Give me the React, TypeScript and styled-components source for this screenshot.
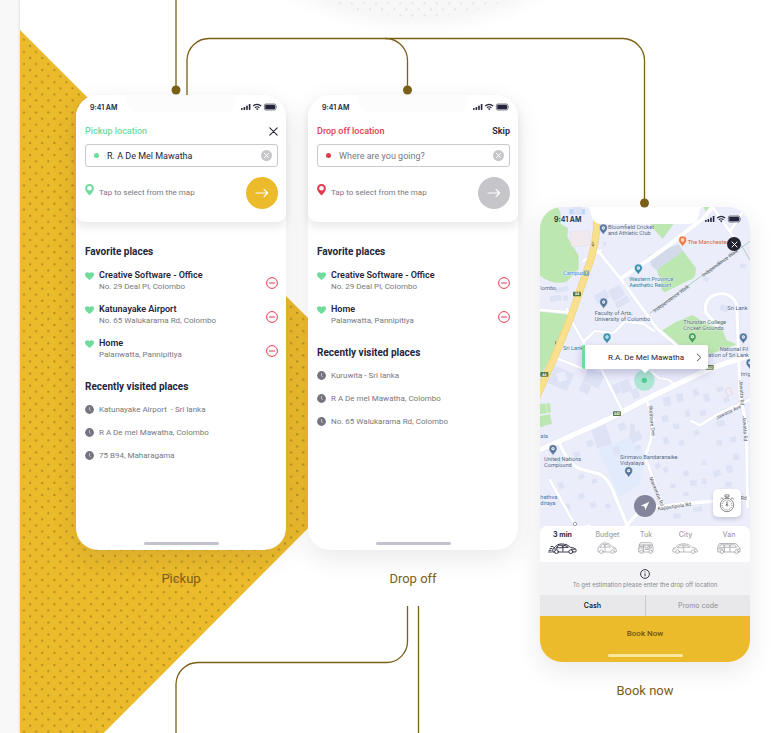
import React from "react";
import styled, { createGlobalStyle } from "styled-components";

const ink = "#24243a";
const muted = "#77777f";
const green = "#6fdc9b";
const red = "#e23b4e";
const amber = "#ecbb2b";
const bronze = "#7a6016";
const smallFont = `Inter, "Liberation Sans", sans-serif`;

const GlobalStyle = createGlobalStyle`
  * { box-sizing: border-box; }
  body {
    margin: 0;
    background: #f8f8f8;
    font-family: Roboto, "Liberation Sans", sans-serif;
    color: ${ink};
  }
  button, input { font: inherit; color: inherit; margin: 0; padding: 0; border: 0; background: none; }
  button { cursor: pointer; }
  h2, h3, p, ul, figure { margin: 0; padding: 0; }
  ul { list-style: none; }
  svg { display: block; }
`;

const Board = styled.main`
  position: relative;
  overflow: hidden;
  min-height: 100vh;
  margin-left: 20px;
  padding: 95px 26px 30px 56px;
  background: #fff;
  box-shadow: 0 0 3px rgba(0, 0, 0, 0.16);
`;

const Layer = styled.svg`
  position: absolute;
  inset: 0;
  width: 100%;
  height: 100%;
  pointer-events: none;
`;

const Screens = styled.div`
  position: relative;
  display: grid;
  grid-template-columns: repeat(3, minmax(0, 1fr));
  gap: 22px;
  align-items: start;
`;

const Flow = styled.figure<{ $lowered?: boolean }>`
  display: flex;
  flex-direction: column;
  gap: 20px;
  margin-top: ${(p) => (p.$lowered ? 112 : 0)}px;
`;

const Caption = styled.figcaption`
  text-align: center;
  font-size: 13px;
  line-height: 18px;
  color: ${bronze};
`;

const Phone = styled.section`
  position: relative;
  display: flex;
  flex-direction: column;
  min-height: 455px;
  border-radius: 22px;
  background: #fff;
  box-shadow: 0 8px 26px rgba(40, 40, 60, 0.1);
`;

const NotchShape = styled.svg`
  position: absolute;
  top: 0;
  left: 50%;
  margin-left: -60px;
`;

const StatusBar = styled.div<{ $floating?: boolean }>`
  position: ${(p) => (p.$floating ? "absolute" : "relative")};
  inset: 0 0 auto 0;
  display: flex;
  align-items: center;
  justify-content: space-between;
  height: 24px;
  padding: 0 8px 0 14px;
  font-family: ${smallFont};
  font-size: 7px;
  font-weight: 600;
`;

const Header = styled.form`
  position: relative;
  height: 127px;
  border-radius: 22px 22px 9px 9px;
  background: #fff;
  box-shadow: 0 5px 8px rgba(40, 40, 60, 0.1);
`;

const HeaderBody = styled.div`
  padding: 5px 8px 0 9px;
`;

const TitleRow = styled.div`
  display: flex;
  align-items: center;
  justify-content: space-between;
  height: 14px;
  font-size: 9px;
  line-height: 14px;
`;

const FieldLabel = styled.label<{ $tone: string }>`
  color: ${(p) => p.$tone};
  font-weight: 500;
`;

const TextButton = styled.button`
  font-weight: 600;
`;

const Field = styled.div`
  display: flex;
  align-items: center;
  gap: 8px;
  height: 23px;
  margin-top: 6px;
  padding: 0 5px 0 8px;
  border: 1px solid #c9c9ce;
  border-radius: 3px;
`;

const Dot = styled.span<{ $tone: string }>`
  flex: none;
  width: 5px;
  height: 5px;
  border-radius: 50%;
  background: ${(p) => p.$tone};
`;

const FieldInput = styled.input`
  flex: 1;
  min-width: 0;
  font-size: 9px;
  line-height: 14px;
  outline: none;
  &::placeholder { color: ${muted}; opacity: 1; }
`;

const MapRow = styled.div`
  display: flex;
  align-items: center;
  justify-content: space-between;
  margin-top: 10px;
`;

const MapLink = styled.button`
  display: flex;
  align-items: center;
  gap: 5px;
  font-size: 8px;
  line-height: 12px;
  color: ${muted};
`;

const PinIcon = styled.svg`
  margin-bottom: 6px;
`;

const GoButton = styled.button<{ $active: boolean }>`
  display: grid;
  place-items: center;
  width: 32px;
  height: 32px;
  border-radius: 50%;
  background: ${(p) => (p.$active ? amber : "#c5c5ca")};
`;

const Places = styled.div`
  padding: 22px 8px 0 9px;
`;

const Heading = styled.h2`
  font-size: 10px;
  line-height: 16px;
  font-weight: 700;
`;

const Favorites = styled.ul`
  padding: 4px 0 13px;
`;

const Favorite = styled.li`
  display: grid;
  grid-template-columns: 9px 1fr auto;
  column-gap: 5px;
  align-items: center;
  height: 34px;
`;

const PlaceName = styled.h3`
  font-size: 9px;
  line-height: 12px;
  font-weight: 600;
`;

const PlaceAddress = styled.p`
  font-size: 8px;
  line-height: 12px;
  color: ${muted};
`;

const HeartIcon = styled.svg`
  align-self: start;
  margin-top: 8px;
`;

const RemoveButton = styled.button`
  margin-top: 4px;
`;

const Recents = styled.ul`
  padding-top: 3px;
`;

const Recent = styled.li`
  display: flex;
  align-items: center;
  gap: 5px;
  height: 23px;
  font-size: 8px;
  color: ${muted};
  white-space: pre;
`;

const HomeBar = styled.span<{ $tone: string }>`
  align-self: center;
  width: 75px;
  height: 3px;
  margin: auto auto 5px;
  border-radius: 2px;
  background: ${(p) => p.$tone};
`;

const BookingScreen = styled.div`
  position: relative;
  display: flex;
  flex-direction: column;
  height: 455px;
  overflow: hidden;
  border-radius: 22px;
`;

const MapArea = styled.div`
  position: relative;
  height: 319px;
`;

const MapDrawing = styled.svg`
  width: 100%;
  height: 328px;
`;

const AddressPopup = styled.button`
  position: absolute;
  top: 138px;
  left: 42px;
  right: 42px;
  display: flex;
  align-items: center;
  justify-content: space-between;
  height: 24px;
  padding: 0 6px 0 23px;
  border-left: 3px solid ${green};
  border-radius: 2px;
  background: #fff;
  box-shadow: 0 4px 8px rgba(50, 50, 110, 0.25);
  font-size: 8px;
  &::after {
    content: "";
    position: absolute;
    left: 57px;
    bottom: -3px;
    width: 6px;
    height: 6px;
    background: #fff;
    transform: rotate(45deg);
  }
`;

const MapButton = styled.button`
  position: absolute;
  display: grid;
  place-items: center;
`;

const CloseMap = styled(MapButton)`
  top: 30px;
  right: 9px;
  width: 14px;
  height: 14px;
  border-radius: 50%;
  background: #23232f;
`;

const LocateButton = styled(MapButton)`
  bottom: 9px;
  left: 50%;
  width: 22px;
  height: 22px;
  margin-left: -11px;
  border-radius: 50%;
  background: #84849a;
`;

const TimerButton = styled(MapButton)`
  right: 9px;
  bottom: 9px;
  width: 28px;
  height: 28px;
  border-radius: 5px;
  background: #fff;
  box-shadow: 0 2px 4px rgba(50, 50, 80, 0.2);
`;

const VehicleBar = styled.div`
  position: relative;
  display: flex;
  justify-content: space-between;
  height: 36px;
  padding: 4px 9px 0 8px;
  border-radius: 7px 7px 0 0;
  background: #fff;
`;

const Vehicle = styled.button<{ $selected?: boolean }>`
  display: flex;
  flex-direction: column;
  align-items: center;
  gap: 2px;
  font-family: ${smallFont};
  font-size: 7px;
  line-height: 10px;
  font-weight: ${(p) => (p.$selected ? 700 : 500)};
  color: ${(p) => (p.$selected ? ink : "#a2a2a8")};
`;

const Estimate = styled.div`
  display: flex;
  flex-direction: column;
  align-items: center;
  justify-content: center;
  gap: 1px;
  height: 33px;
  background: #f3f3f5;
  font-family: ${smallFont};
  font-size: 6px;
  line-height: 9px;
  color: #88888e;
  white-space: nowrap;
`;

const PayTabs = styled.div`
  display: grid;
  grid-template-columns: 1fr 1fr;
  height: 21px;
  background: #e8e8ea;
  font-family: ${smallFont};
`;

const PayTab = styled.button<{ $selected?: boolean }>`
  font-size: 7px;
  font-weight: ${(p) => (p.$selected ? 600 : 400)};
  color: ${(p) => (p.$selected ? ink : "#8c8c92")};
  & + & { border-left: 1px solid #cacace; }
`;

const BookBar = styled.div`
  display: flex;
  flex: 1;
  flex-direction: column;
  background: ${amber};
`;

const BookButton = styled.button`
  height: 34px;
  font-size: 8px;
  font-weight: 500;
  color: #6b5413;
`;

function StatusIcons() {
  return (
    <svg width="37" height="8" viewBox="0 0 37 8" fill={ink} aria-hidden="true">
      <rect x="0" y="5" width="1.6" height="2" rx=".4" />
      <rect x="2.6" y="4" width="1.6" height="3" rx=".4" />
      <rect x="5.2" y="2.6" width="1.6" height="4.4" rx=".4" />
      <rect x="7.8" y="1" width="1.6" height="6" rx=".4" />
      <g fill="none" stroke={ink} strokeWidth="1.2">
        <path d="M12.2 3Q16.2-.4 20.2 3" />
        <path d="M13.9 4.7Q16.2 2.8 18.5 4.7" />
      </g>
      <path d="M14.9 5.7Q16.2 4.8 17.5 5.7L16.2 7.2Z" />
      <rect x="23.4" y="1" width="11.4" height="6" rx="1.4" fill="none" stroke={ink} strokeWidth=".6" />
      <rect x="24.2" y="1.8" width="9.8" height="4.4" rx=".8" />
      <path d="M35.4 3Q36.6 4 35.4 5Z" />
    </svg>
  );
}

function Status({ floating, notch }: { floating?: boolean; notch: string }) {
  return (
    <StatusBar $floating={floating}>
      <NotchShape width="120" height="17" viewBox="0 0 120 17" aria-hidden="true">
        <path d="M0 0C5 0 5 2 6 7C7 13 10 17 16 17H104C110 17 113 13 114 7C115 2 115 0 120 0Z" fill={notch} />
      </NotchShape>
      <span>9:41 AM</span>
      <StatusIcons />
    </StatusBar>
  );
}

function ClearIcon() {
  return (
    <svg width="11" height="11" viewBox="0 0 11 11" aria-hidden="true">
      <circle cx="5.5" cy="5.5" r="5.5" fill="#c5c5ca" />
      <path d="M3.4 3.4L7.6 7.6M7.6 3.4L3.4 7.6" stroke="#fff" strokeWidth="1" strokeLinecap="round" />
    </svg>
  );
}

type FavoritePlace = { name: string; address: string };

function LocationScreen(props: {
  id: string;
  title: string;
  tone: string;
  value?: string;
  skippable?: boolean;
  favorites: FavoritePlace[];
  recents: string[];
}) {
  const { id, title, tone, value, skippable, favorites, recents } = props;
  return (
    <Phone>
      <Header onSubmit={(e) => e.preventDefault()}>
        <Status notch="#fcfcfc" />
        <HeaderBody>
          <TitleRow>
            <FieldLabel htmlFor={id} $tone={tone}>{title}</FieldLabel>
            {skippable ? (
              <TextButton type="button">Skip</TextButton>
            ) : (
              <button type="button" aria-label="Close">
                <svg width="9" height="9" viewBox="0 0 9 9" stroke={ink} strokeWidth="1.1" strokeLinecap="round">
                  <path d="M.8.8L8.2 8.2M8.2.8L.8 8.2" />
                </svg>
              </button>
            )}
          </TitleRow>
          <Field>
            <Dot $tone={tone} />
            <FieldInput id={id} defaultValue={value} placeholder="Where are you going?" />
            <button type="button" aria-label="Clear"><ClearIcon /></button>
          </Field>
          <MapRow>
            <MapLink type="button">
              <PinIcon width="9" height="12" viewBox="0 0 9 12" aria-hidden="true">
                <path d="M4.5 0A4.4 4.4 0 0 0 .1 4.4C.1 7 2.2 8.6 4.5 11.6C6.8 8.6 8.9 7 8.9 4.4A4.4 4.4 0 0 0 4.5 0Z" fill={tone} />
                <circle cx="4.5" cy="4.3" r="2.3" fill="#fff" />
              </PinIcon>
              Tap to select from the map
            </MapLink>
            <GoButton $active={!!value} aria-label="Continue">
              <svg width="14" height="10" viewBox="0 0 14 10" fill="none" stroke="#fff" strokeWidth="1.2" strokeLinecap="round" strokeLinejoin="round">
                <path d="M1 5H12.6M9 1.4L12.6 5L9 8.6" />
              </svg>
            </GoButton>
          </MapRow>
        </HeaderBody>
      </Header>
      <Places>
        <Heading>Favorite places</Heading>
        <Favorites>
          {favorites.map((f) => (
            <Favorite key={f.name}>
              <HeartIcon width="9" height="8" viewBox="0 0 9 8" aria-hidden="true">
                <path d="M4.5 7.9C2 6 0 4.6 0 2.5C0 .2 3 -.7 4.5 1.3C6-.7 9 .2 9 2.5C9 4.6 7 6 4.5 7.9Z" fill={green} />
              </HeartIcon>
              <div>
                <PlaceName>{f.name}</PlaceName>
                <PlaceAddress>{f.address}</PlaceAddress>
              </div>
              <RemoveButton aria-label={"Remove " + f.name}>
                <svg width="12" height="12" viewBox="0 0 12 12" fill="none" stroke={red}>
                  <circle cx="6" cy="6" r="5.4" />
                  <path d="M3 6H9" />
                </svg>
              </RemoveButton>
            </Favorite>
          ))}
        </Favorites>
        <Heading>Recently visited places</Heading>
        <Recents>
          {recents.map((r) => (
            <Recent key={r}>
              <svg width="9" height="9" viewBox="0 0 9 9" aria-hidden="true">
                <circle cx="4.5" cy="4.5" r="4.4" fill="#747480" />
                <path d="M4.5 2.2V4.8L5.8 5.8" fill="none" stroke="#d8d8de" strokeWidth=".8" />
              </svg>
              {r}
            </Recent>
          ))}
        </Recents>
      </Places>
      <HomeBar $tone="#c5c2d0" />
    </Phone>
  );
}

const buildings: [number, number, number, number, number][] = [
  [62, 486, 62, 56, 24], [165, 490, 52, 46, 24], [150, 530, 30, 28, 24], [270, 520, 32, 36, -20],
  [305, 545, 22, 30, -20], [250, 530, 18, 30, -20], [190, 650, 46, 70, -18], [265, 648, 22, 22, -24],
  [300, 675, 34, 28, -24], [250, 720, 18, 22, -20], [80, 760, 14, 12, -24], [130, 735, 20, 18, -24],
  [170, 700, 20, 18, -24], [145, 802, 18, 14, -20], [185, 815, 16, 14, -20], [85, 825, 16, 20, -20],
  [145, 860, 18, 16, -20], [180, 885, 18, 16, -20], [100, 890, 20, 18, -20], [225, 890, 16, 14, -20],
  [300, 650, 14, 40, 0], [315, 715, 18, 14, -20], [400, 570, 22, 26, -10], [440, 560, 20, 26, -10],
  [490, 545, 16, 22, -16], [522, 560, 16, 24, -16], [395, 625, 20, 20, -10], [430, 650, 18, 16, -14],
  [465, 610, 14, 20, -14], [510, 610, 18, 16, -14], [560, 640, 24, 18, -20], [580, 570, 18, 16, -20],
  [560, 540, 20, 14, -20], [400, 690, 16, 22, -14], [445, 700, 18, 16, -14], [490, 670, 18, 14, -14],
  [560, 700, 16, 16, -10], [600, 690, 18, 16, -10], [460, 790, 16, 18, 0], [480, 820, 20, 16, 0],
  [515, 760, 14, 14, 0], [515, 815, 14, 16, 0], [550, 790, 22, 18, -20], [590, 775, 18, 22, -10],
  [585, 825, 20, 16, 10], [375, 770, 16, 14, -30], [400, 780, 14, 16, -30], [420, 830, 16, 14, 0],
  [460, 855, 16, 12, 0], [490, 900, 26, 14, -6], [430, 920, 22, 14, -6], [610, 740, 18, 18, 0],
  [240, 240, 40, 36, -30], [195, 255, 40, 28, -30], [255, 275, 44, 20, -30], [60, 265, 34, 18, -10],
  [100, 265, 14, 16, -10], [75, 240, 40, 14, -10], [130, 0, 26, 20, 0], [560, 160, 14, 14, 10],
  [630, 170, 18, 14, 10], [220, 105, 8, 10, 0], [520, 210, 16, 14, 20], [570, 295, 26, 18, 20],
  [340, 230, 16, 12, -30], [370, 440, 18, 12, -20],
];

const roads: [string, number][] = [
  ["M548 0L520 34L420 112L350 162L272 214", 13],
  ["M195 124L216 146L280 226L380 364L450 424", 10],
  ["M160 162L212 130", 8],
  ["M548 0L600 74L652 -6", 9],
  ["M600 74L628 116", 7],
  ["M562 354L528 318Q520 272 560 262Q602 252 620 292L630 560L650 660L652 900", 10],
  ["M26 730L240 634L350 576L540 484L668 442", 17],
  ["M70 450L160 485", 8],
  ["M110 305L124 340L160 404L170 450L215 488L274 606", 8],
  ["M160 404L195 372L250 378L285 344L340 350L372 372", 8],
  ["M365 495L388 514Q424 514 430 532", 7],
  ["M352 586L370 639L362 700L345 750L398 890", 9],
  ["M90 712Q115 772 150 785L210 802Q232 812 248 850L292 956", 11],
  ["M60 820L142 966", 9],
  ["M286 960L335 905L460 890L660 874", 11],
  ["M485 642L510 655L570 618L664 576", 9],
  ["M30 308L110 316L130 320", 9],
  ["M120 966L180 955", 6],
];

function MapPin({ x, y, tone }: { x: number; y: number; tone: string }) {
  return (
    <g transform={`translate(${x} ${y})`}>
      <path d="M0 20C-3 11-12 8-12-1A12 12 0 0 1 12-1C12 8 3 11 0 20Z" fill={tone} stroke="#fff" strokeWidth="1.5" />
      <circle cy="-1" r="5" fill="#fff" />
      <path d="M-2.5-3.5H2.5V1H-2.5Z" fill={tone} opacity=".55" />
    </g>
  );
}

function CityMap() {
  const slate = "#56759c";
  const teal = "#3b8fb0";
  const avenue = "M200 30V66Q196 116 180 164L125 322L96 396L60 480L20 570";
  return (
    <MapDrawing viewBox="30 0 630 984" preserveAspectRatio="xMidYMin slice" role="img" aria-label="Map of Colombo">
      <rect x="-400" width="1500" height="984" fill="#ebedfb" />
      <path d="M205 730L300 690L345 745L330 830L270 870Z" fill="#e1ebfb" />
      <g fill="#bde7b0">
        <path d="M0 0H84L92 20V50L114 64L112 90L146 146V186L110 224Q70 236 30 206L0 190Z" />
        <path d="M20 312L122 324L80 420L30 510Z" />
        <path d="M360 54L384 44H436L398 96Z" />
        <path d="M446 114L497 182Q500 212 480 218L405 256Q388 248 394 224L380 190Z" />
        <path d="M394 372L436 346L488 324L530 352L576 366L590 400L620 412L530 446L474 452L452 424Z" />
        <path d="M520 0H540L528 14Z" />
        <path d="M26 590H46L52 618L28 622ZM48 590L60 588L62 615L54 618ZM26 628L60 622L66 650L26 660ZM26 640H40V660H26Z" />
      </g>
      <path d="M118 6H165V22H118Z" fill="#b9d8fa" />
      <path d="M120 74L178 70L180 112L160 118H124Z" fill="#f1e9ee" stroke="#ded6e4" />
      <path d="M354 146L446 112L458 134L380 190L364 176Z" fill="#d3dae9" />
      <g fill="#dde2f5">
        {buildings.map(([x, y, w, h, a]) => (
          <rect key={`${x}-${y}`} x={x} y={y} width={w} height={h} transform={`rotate(${a} ${x + w / 2} ${y + h / 2})`} />
        ))}
      </g>
      <path d="M78 500L104 492L112 518L86 526Z" fill="#ebedfb" />
      <path d="M586 548L600 542L608 560L594 568Z" fill="none" stroke="#f0c6c4" strokeWidth="2" />
      <g fill="none" strokeLinejoin="round" strokeLinecap="round">
        {roads.map(([d, w]) => <path key={d} d={d} stroke="#dadff0" strokeWidth={w + 2} />)}
        {roads.map(([d, w]) => <path key={d} d={d} stroke="#fff" strokeWidth={w} />)}
        <path d={avenue} stroke="#ecd07c" strokeWidth="22" />
        <path d={avenue} stroke="#f8e08c" strokeWidth="18" />
        <path d="M360 318L664 100M628 104L664 166" stroke="#95bfa2" strokeWidth="2" />
      </g>
      <path d="M189 104V116M185 112L189 118L193 112M78 402L76 412" stroke="#77683d" strokeWidth="2" fill="none" />
      <circle cx="135" cy="951" r="5" fill="#fff" stroke="#777" strokeWidth="2" />

      <MapPin x={220} y={64} tone={slate} />
      <MapPin x={458} y={100} tone="#ee7a45" />
      <MapPin x={325} y={184} tone={teal} />
      <MapPin x={221} y={286} tone={slate} />
      <MapPin x={231} y={391} tone={teal} />
      <MapPin x={487} y={390} tone="#4aa35a" />
      <MapPin x={640} y={391} tone={slate} />
      <MapPin x={660} y={468} tone={slate} />
      <MapPin x={69} y={726} tone={slate} />
      <MapPin x={296} y={792} tone={slate} />

      <g fontFamily="Roboto, sans-serif" fontSize="17" fill="#4d6584" stroke="#f3f4fd" strokeWidth="2" paintOrder="stroke">
        <text x="234" y="65">Bloomfield Cricket</text>
        <text x="234" y="83">and Athletic Club</text>
        <text x="473" y="110" fill="#cf6037">The Manchester</text>
        <text x="298" y="223" fill="#2d7f9c">Western Province</text>
        <text x="298" y="241" fill="#2d7f9c">Aesthetic Resort</text>
        <text x="99" y="205" fill="#3a8fe0">Campus</text>
        <text x="31" y="250">lombo</text>
        <text x="194" y="325">Faculty of Arts,</text>
        <text x="194" y="343">University of Colombo</text>
        <text x="592" y="309">Sri Lank</text>
        <text x="460" y="352" fill="#44705a">Thurstan College</text>
        <text x="460" y="370" fill="#44705a">Cricket Grounds</text>
        <text x="99" y="430" fill="#2d7f9c">Sri Lank</text>
        <text x="569" y="431">National Fil</text>
        <text x="529" y="449">ration of Sri Lank</text>
        <text x="632" y="508">Irrig</text>
        <text x="31" y="692" fill="#3c7a9e">ala</text>
        <text x="42" y="762">United Nations</text>
        <text x="42" y="780">Compound</text>
        <text x="270" y="756">Sirimavo Bandaranaike</text>
        <text x="270" y="774">Vidyalaya</text>
        <text x="31" y="876" fill="#3c6fae">hathva</text>
        <text x="31" y="894" fill="#3c6fae">diraya</text>
      </g>
      <path d="M163 192H176V205H163ZM166 195V202H173V195" fill="none" stroke="#3a8fe0" strokeWidth="2" />
      <g fontFamily="Roboto, sans-serif" fontSize="15" fill="#555964">
        <text transform="translate(520 210) rotate(-36)">Independence Walk</text>
        <text transform="translate(374 317) rotate(-36)">Independence Walk</text>
        <text transform="translate(560 638) rotate(-26)">Jawatta Ave</text>
        <text transform="translate(628 520) rotate(87)">Jawatta Rd</text>
        <text transform="translate(638 628) rotate(87)">Jawatta Rd</text>
        <text transform="translate(356 596) rotate(84)">Skelmore Dve</text>
        <text transform="translate(358 812) rotate(68)">Mackenzie Rd</text>
        <text transform="translate(384 910) rotate(-8)">Kappetipola Rd</text>
        <text x="632" y="880">Rd</text>
      </g>
      <g fontFamily="Roboto, sans-serif" fontSize="10" fontWeight="700" fill="#fff" textAnchor="middle">
        {[[141, 261, "A4"], [43, 502, "A4"], [539, 481, "A42"], [261, 620, "A42"]].map(([x, y, t]) => (
          <g key={`${x}`} transform={`translate(${x} ${y})`}>
            <rect x="-12" y="-7" width="24" height="14" rx="2" fill="#55763f" />
            <text y="4">{t}</text>
          </g>
        ))}
      </g>
      <circle cx="343" cy="520" r="31" fill="#8fe0bd" opacity=".65" />
      <circle cx="343" cy="520" r="8" fill="#4fce8f" />
    </MapDrawing>
  );
}

function VehicleIcon({ kind }: { kind: string }) {
  const shared = { fill: "none", stroke: "currentColor", strokeLinecap: "round" as const, strokeLinejoin: "round" as const };
  if (kind === "fast") {
    return (
      <svg width="29" height="12" viewBox="0 0 29 12" strokeWidth=".9" {...shared}>
        <path d="M5 10H6.500M10.500 10H20.500M25 10H27.700Q28.700 8 27.500 6.800Q25.500 5.700 22.500 5.400Q19 2 15.500 2H12Q9 2.200 7 5.200L5 6.300Q4.300 8 5 10" />
        <path d="M8.500 5.400L11 3.200H14.300V5.400ZM15.500 3.200Q18 3.300 20.300 5.400H15.500ZM14.900 5.600V9M6 6.900H9M23.500 7.300H26.500" />
        <circle cx="8.500" cy="9.700" r="1.900" /><circle cx="22.800" cy="9.700" r="1.900" />
        <path d="M3 4.500H5M2 6.500H3.500M1 8.300H3.200M.6 10H3.400" />
      </svg>
    );
  }
  if (kind === "mini") {
    return (
      <svg width="20" height="12" viewBox="0 0 20 12" strokeWidth=".7" {...shared}>
        <path d="M2.500 10H1Q.3 7 1.500 5.500Q3.500 1 8 .8Q12.500.8 15 4.600Q18.800 5.300 19.300 7.500V10H17.500M6.200 10H13.800" />
        <path d="M3 5Q4.500 2.200 7.400 2.100V5ZM8.600 2.100Q11.500 2.100 13.500 5H8.600ZM8 5.500V9.500M16.500 6.800H18.500" />
        <circle cx="4.400" cy="9.700" r="1.800" /><circle cx="15.600" cy="9.700" r="1.800" />
      </svg>
    );
  }
  if (kind === "tuk") {
    return (
      <svg width="16" height="12" viewBox="0 0 16 12" strokeWidth=".8" {...shared}>
        <path d="M1.500 10H.8V6L2 1.500Q2.200.7 3 .7H12.500Q13.500.7 13.800 1.500L15 5.500V8.500M6 10H10.500" />
        <path d="M1 3H14.200M1 6H5.500V3M5.500 6V9.500M7 3V6H10V3M7 7.500H11L11.500 3M12.500 3.500L13.500 6H11.500M2 4.500H5" />
        <circle cx="3.700" cy="9.700" r="1.700" /><circle cx="12.700" cy="9.700" r="1.700" />
      </svg>
    );
  }
  if (kind === "city") {
    return (
      <svg width="26" height="12" viewBox="0 0 26 12" strokeWidth=".7" {...shared}>
        <path d="M3.500 10H1Q.3 8 1.200 6.500L3.500 5.500Q6 2 10 1.800H13Q17 1.800 19.500 5Q24 5.500 25.300 8V10H23.300M7.300 10H19" />
        <path d="M5.500 5.300Q7.500 3 11 2.900V5.300ZM12.300 2.900Q15.500 2.900 17.700 5.300H12.300ZM11.700 5.800V9.500M22 7.200H24.500M1.500 7H3" />
        <circle cx="5.400" cy="9.700" r="1.800" /><circle cx="21.200" cy="9.700" r="1.800" />
      </svg>
    );
  }
  return (
    <svg width="24" height="12" viewBox="0 0 24 12" strokeWidth=".8" {...shared}>
      <path d="M3 10H.8V4.500L2.500 1.500H18Q20 1.500 21 4.500L23 6V10H21.500M6.800 10H17.500" />
      <path d="M2.500 5.300L3.500 2.800H7V5.300ZM8 2.800H12.500V5.300H8ZM13.500 2.800H17.500L19.500 5.300H13.500ZM7.500 6V9.500M13 6V9.500M1 7H6M20 7.200H22.500" />
      <circle cx="4.900" cy="9.700" r="1.800" /><circle cx="19.500" cy="9.700" r="1.800" />
    </svg>
  );
}

const vehicles = [
  { label: "3 min", kind: "fast" },
  { label: "Budget", kind: "mini" },
  { label: "Tuk", kind: "tuk" },
  { label: "City", kind: "city" },
  { label: "Van", kind: "van" },
];

function Booking() {
  return (
    <Phone>
      <BookingScreen>
        <MapArea>
          <CityMap />
          <AddressPopup>
            R.A. De Mel Mawatha
            <svg width="6" height="9" viewBox="0 0 6 9" fill="none" stroke="#55555f" strokeWidth="1">
              <path d="M1 .8L4.8 4.5L1 8.2" />
            </svg>
          </AddressPopup>
          <CloseMap aria-label="Close map">
            <svg width="7" height="7" viewBox="0 0 7 7" stroke="#fff" strokeWidth="1" strokeLinecap="round">
              <path d="M1 1L6 6M6 1L1 6" />
            </svg>
          </CloseMap>
          <LocateButton aria-label="My location">
            <svg width="10" height="10" viewBox="0 0 10 10" fill="#fff">
              <path d="M9.3.7L.8 4.8L4.6 5.4L5.2 9.2Z" />
            </svg>
          </LocateButton>
          <TimerButton aria-label="Schedule ride">
            <svg width="16" height="19" viewBox="0 0 16 19" fill="none" stroke="#6d6d73" strokeWidth=".8">
              <circle cx="8" cy="11" r="6.7" />
              <circle cx="8" cy="11" r="4.9" strokeDasharray="1.2 .8" />
              <path d="M8 7.500V11" strokeWidth="1" />
              <circle cx="8" cy="11.2" r=".9" />
              <path d="M6 .9H10V2.900H6ZM7.200 2.900V4.200M8.800 2.900V4.200M1.400 5.200L3 3.700L4.200 4.800M14.600 5.200L13 3.700L11.800 4.800" />
            </svg>
          </TimerButton>
        </MapArea>
        <VehicleBar>
          {vehicles.map((v, i) => (
            <Vehicle key={v.label} $selected={i === 0} aria-pressed={i === 0}>
              {v.label}
              <VehicleIcon kind={v.kind} />
            </Vehicle>
          ))}
        </VehicleBar>
        <Estimate>
          <svg width="10" height="10" viewBox="0 0 10 10" fill="none" stroke={ink} strokeWidth=".9" aria-hidden="true">
            <circle cx="5" cy="5" r="4.4" />
            <path d="M5 4.400V7.400M5 2.500V3.500" />
          </svg>
          <p>To get estimation please enter the drop off location</p>
        </Estimate>
        <PayTabs>
          <PayTab $selected>Cash</PayTab>
          <PayTab>Promo code</PayTab>
        </PayTabs>
        <BookBar>
          <BookButton>Book Now</BookButton>
          <HomeBar $tone="#f9e79c" />
        </BookBar>
        <Status floating notch="#fff" />
      </BookingScreen>
    </Phone>
  );
}

function Backdrop() {
  return (
    <Layer aria-hidden="true">
      <defs>
        <pattern id="dots" x="-2" y="33.7" width="12.14" height="12.14" patternUnits="userSpaceOnUse">
          <circle cx="6" cy="6" r="1.1" />
          <circle cx="0" cy="0" r="1.1" />
          <circle cx="12.14" cy="0" r="1.1" />
          <circle cx="0" cy="12.14" r="1.1" />
          <circle cx="12.14" cy="12.14" r="1.1" />
        </pattern>
        <filter id="haze" x="-10%" y="-10%" width="120%" height="120%">
          <feGaussianBlur stdDeviation="8" />
        </filter>
      </defs>
      <circle cx="397" cy="-222" r="247" fill="#ececee" opacity=".5" filter="url(#haze)" />
      <circle cx="397" cy="-228" r="247" fill="#f7f7f8" />
      <circle cx="397" cy="-230" r="247" fill="url(#dots)" opacity=".08" />
      <path d="M0 30L393 423L0 817Z" fill={amber} />
      <path d="M0 34L389 423L0 813Z" fill="url(#dots)" opacity=".25" />
    </Layer>
  );
}

function Connectors() {
  return (
    <Layer aria-hidden="true">
      <g fill="none" stroke={bronze} strokeWidth="1.3">
        <path d="M156 0V90" />
        <path d="M167 95V60A22 22 0 0 1 189 38.5H603A22 22 0 0 1 624.5 60V203" />
        <path d="M365 38.5A22 22 0 0 1 387.5 60V90" />
        <path d="M387.5 606V641A21 21 0 0 1 366 662.5H178A22 22 0 0 0 156 684V900" />
        <path d="M398.5 606V900" />
      </g>
      <g fill={bronze}>
        <circle cx="156" cy="90" r="4.5" />
        <circle cx="387.5" cy="90" r="4.5" />
        <circle cx="624.5" cy="203" r="4.5" />
      </g>
    </Layer>
  );
}

export default function App() {
  return (
    <>
      <GlobalStyle />
      <Board>
        <Backdrop />
        <Screens>
          <Flow>
            <LocationScreen
              id="pickup"
              title="Pickup location"
              tone={green}
              value="R. A De Mel Mawatha"
              favorites={[
                { name: "Creative Software - Office", address: "No. 29 Deal Pl, Colombo" },
                { name: "Katunayake Airport", address: "No. 65 Walukarama Rd, Colombo" },
                { name: "Home", address: "Palanwatta, Pannipitiya" },
              ]}
              recents={["Katunayake Airport  - Sri lanka", "R A De mel Mawatha, Colombo", "75 B94, Maharagama"]}
            />
            <Caption>Pickup</Caption>
          </Flow>
          <Flow>
            <LocationScreen
              id="dropoff"
              title="Drop off location"
              tone={red}
              skippable
              favorites={[
                { name: "Creative Software - Office", address: "No. 29 Deal Pl, Colombo" },
                { name: "Home", address: "Palanwatta, Pannipitiya" },
              ]}
              recents={["Kuruwita - Sri lanka", "R A De mel Mawatha, Colombo", "No. 65 Walukarama Rd, Colombo"]}
            />
            <Caption>Drop off</Caption>
          </Flow>
          <Flow $lowered>
            <Booking />
            <Caption>Book now</Caption>
          </Flow>
        </Screens>
        <Connectors />
      </Board>
    </>
  );
}
